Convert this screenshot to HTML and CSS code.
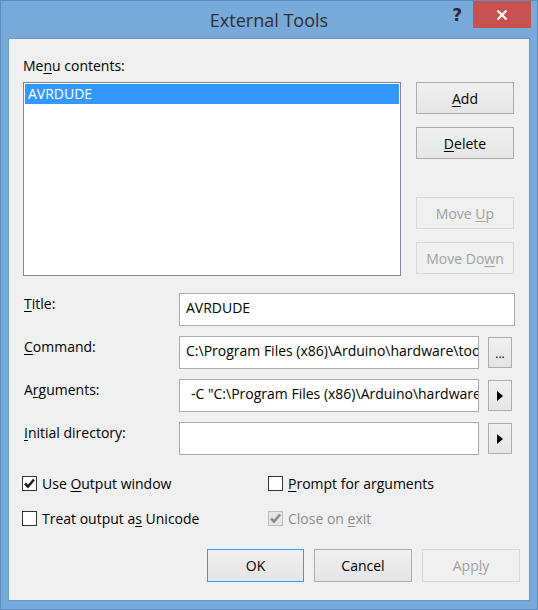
FILE: index.html
```html
<!DOCTYPE html>
<html>
<head>
<meta charset="utf-8">
<link rel="stylesheet" href="styles.css">
</head>
<body>
<div class="window">
  <div class="titlebar">
    <div></div>
    <div class="title">External Tools</div>
    <div class="controls">
      <span class="help">?</span>
      <span class="close"><svg width="12" height="12" viewBox="0 0 12 12"><path d="M1.5 1.5 L10.5 10.5 M10.5 1.5 L1.5 10.5" stroke="#fff" stroke-width="2.2"/></svg></span>
    </div>
  </div>
  <div class="client">
    <div class="label-top">Me<u>n</u>u contents:</div>
    <div class="top">
      <div class="listbox">
        <div class="item selected">AVRDUDE</div>
      </div>
      <div class="side">
        <button class="btn"><u>A</u>dd</button>
        <button class="btn"><u>D</u>elete</button>
        <button class="btn disabled gap">Move <u>U</u>p</button>
        <button class="btn disabled">Move Do<u>w</u>n</button>
      </div>
    </div>
    <div class="form">
      <div class="flabel"><u>T</u>itle:</div>
      <div class="input span2">AVRDUDE</div>

      <div class="flabel"><u>C</u>ommand:</div>
      <div class="input"><span class="val">C:\Program Files (x86)\Arduino\hardware\tools\avr\bin\avrdude.exe</span></div>
      <button class="small dots">...</button>

      <div class="flabel">A<u>r</u>guments:</div>
      <div class="input args"><span class="val">-C "C:\Program Files (x86)\Arduino\hardware\tools\avr\etc\avrdude.conf"</span></div>
      <button class="small"><svg width="6" height="10" viewBox="0 0 6 10"><polygon points="0,0 6,5 0,10" fill="#000"/></svg></button>

      <div class="flabel"><u>I</u>nitial directory:</div>
      <div class="input"></div>
      <button class="small"><svg width="6" height="10" viewBox="0 0 6 10"><polygon points="0,0 6,5 0,10" fill="#000"/></svg></button>
    </div>
    <div class="checks">
      <label class="check"><span class="box"><svg width="13" height="13" viewBox="0 0 13 13"><path d="M2 6.5 L5 9.5 L11 2.5" stroke="#222" stroke-width="2.6" fill="none"/></svg></span><span>Use <u>O</u>utput window</span></label>
      <label class="check"><span class="box"></span><span><u>P</u>rompt for arguments</span></label>
      <label class="check"><span class="box"></span><span>Treat output a<u>s</u> Unicode</span></label>
      <label class="check off"><span class="box"><svg width="13" height="13" viewBox="0 0 13 13"><path d="M2 6.5 L5 9.5 L11 2.5" stroke="#8a8a8a" stroke-width="2.6" fill="none"/></svg></span><span>Close on <u>e</u>xit</span></label>
    </div>
    <div class="footer">
      <button class="btn default">OK</button>
      <button class="btn">Cancel</button>
      <button class="btn disabled">App<u>l</u>y</button>
    </div>
  </div>
</div>
</body>
</html>
```
FILE: styles.css
```css
* { box-sizing: border-box; }
html, body { margin: 0; padding: 0; }
body {
  font-family: "Open Sans", "Noto Sans", sans-serif;
  font-size: 14px;
  color: #000;
}
u { text-decoration: underline; text-underline-offset: 2px; }
.window {
  width: 538px;
  height: 610px;
  background: #77aad9;
  border: 1px solid #5d8cc0;
  display: flex;
  flex-direction: column;
}
.titlebar {
  height: 37px;
  display: grid;
  grid-template-columns: 1fr auto 1fr;
  align-items: start;
}
.title {
  font-size: 18px;
  color: #2f2f2f;
  line-height: 20px;
  padding-top: 9px;
}
.controls {
  display: flex;
  justify-content: flex-end;
  align-items: start;
}
.help {
  font-family: "DejaVu Sans", sans-serif;
  font-weight: bold;
  font-size: 17px;
  color: #2a2a2a;
  line-height: 20px;
  padding-top: 4px;
  margin-right: 11px;
}
.close {
  width: 58px;
  height: 27px;
  background: #c75050;
  display: flex;
  align-items: center;
  justify-content: center;
  margin-right: 6px;
}
.client {
  margin: 0 7px;
  height: 563px;
  background: #f0f0f0;
  border: 1px solid #6a98cb;
  padding: 17px 14px 0 14px;
}
.label-top { line-height: 20px; height: 26px; }
.top {
  display: flex;
  gap: 15px;
}
.listbox {
  width: 378px;
  height: 194px;
  background: #fff;
  border: 1px solid #828790;
  padding: 1px;
}
.item {
  height: 20px;
  line-height: 20px;
  padding-left: 3px;
}
.item.selected { background: #3399ff; color: #fff; }
.side {
  display: flex;
  flex-direction: column;
  gap: 13px;
}
.btn {
  font-family: inherit;
  font-size: 14px;
  width: 98px;
  height: 32px;
  background: linear-gradient(#f0f0f0, #e5e5e5);
  border: 1px solid #acacac;
  color: #000;
  padding: 0;
}
.btn.gap { margin-top: 25px; }
.btn.disabled {
  background: #f0f0f0;
  border-color: #d9d9d9;
  color: #a0a0a0;
}
.btn.default { border-color: #3399ff; }
.form {
  display: grid;
  grid-template-columns: 156px 300px 36px;
  row-gap: 10px;
  margin-top: 17px;
}
.flabel {
  line-height: 20px;
  padding-top: 1px;
  padding-left: 1px;
}
.input {
  height: 33px;
  background: #fff;
  border: 1px solid #abadb3;
  line-height: 28px;
  padding-left: 6px;
  white-space: nowrap;
  overflow: hidden;
  min-width: 0;
}
.val {
  display: block;
  overflow: hidden;
  text-overflow: clip;
}
.input.args { padding-left: 11px; }
.span2 { grid-column: span 2; }
.small {
  width: 24px;
  height: 31px;
  margin: 1px 0 0 9px;
  background: linear-gradient(#f0f0f0, #e5e5e5);
  border: 1px solid #acacac;
  padding: 0;
  display: flex;
  align-items: center;
  justify-content: center;
}
.small.dots {
  font-family: inherit;
  font-size: 12px;
  align-items: flex-end;
  padding-bottom: 7px;
  line-height: 12px;
}
.checks {
  display: grid;
  grid-template-columns: 246px 1fr;
  row-gap: 15px;
  margin-top: 18px;
}
.check {
  display: flex;
  align-items: center;
  gap: 5px;
  height: 20px;
  margin-left: -1px;
}
.box {
  width: 15px;
  height: 15px;
  border: 1px solid #333;
  background: #fff;
  display: flex;
  align-items: center;
  justify-content: center;
}
.check.off { color: #8d8d8d; }
.check.off .box { border-color: #bcbcbc; background: #e6e6e6; }
.footer {
  display: flex;
  justify-content: flex-end;
  gap: 10px;
  margin-top: 21px;
  margin-right: -5px;
}
.footer .btn { height: 33px; }
.footer .default { width: 97px; }
```
